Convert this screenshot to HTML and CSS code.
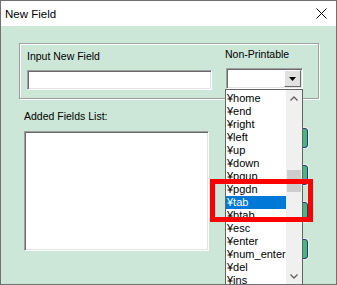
FILE: index.html
```html
<!DOCTYPE html>
<html>
	<head>
		<meta charset="UTF-8">
		<title>New Field</title>
		<link rel="stylesheet" href="styles.css">
	</head>

	<body>
		<div class="window">
			<div class="titlebar">
				<span class="caption">New Field</span>
				<svg class="close" width="11" height="11" viewBox="0 0 11 11">
					<path d="M0.5 0.5 L10.5 10.5 M10.5 0.5 L0.5 10.5" stroke="#000" stroke-width="1" fill="none"/>
				</svg>
			</div>
			<div class="client">
				<div class="group">
					<div class="col-input">
						<label class="lbl">Input New Field</label>
						<div class="textbox"></div>
					</div>
					<div class="col-np">
						<label class="lbl">Non-Printable</label>
						<div class="combo">
							<span class="combo-btn">
								<svg width="7" height="4" viewBox="0 0 7 4"><path d="M0 0 H7 L3.5 4 Z" fill="#000"/></svg>
							</span>
						</div>
					</div>
				</div>
				<div class="lower">
					<div class="col-list">
						<label class="lbl">Added Fields List:</label>
						<div class="listbox"></div>
					</div>
					<div class="buttons">
						<button class="gbtn"></button>
						<button class="gbtn"></button>
						<button class="gbtn"></button>
						<button class="gbtn"></button>
					</div>
				</div>
			</div>

			<!-- dropdown of the Non-Printable combo -->
			<div class="dropdown">
				<ul class="items">
					<li>¥home</li>
					<li>¥end</li>
					<li>¥right</li>
					<li>¥left</li>
					<li>¥up</li>
					<li>¥down</li>
					<li>¥pgup</li>
					<li>¥pgdn</li>
					<li class="sel">¥tab</li>
					<li>¥btab</li>
					<li>¥esc</li>
					<li>¥enter</li>
					<li>¥num_enter</li>
					<li>¥del</li>
					<li>¥ins</li>
				</ul>
				<div class="scroll">
					<span class="arrow">
						<svg width="8" height="5" viewBox="0 0 8 5"><path d="M0.5 4.5 L4 1 L7.5 4.5" stroke="#606060" stroke-width="1.3" fill="none"/></svg>
					</span>
					<span class="thumb"></span>
					<span class="arrow down">
						<svg width="8" height="5" viewBox="0 0 8 5"><path d="M0.5 0.5 L4 4 L7.5 0.5" stroke="#606060" stroke-width="1.3" fill="none"/></svg>
					</span>
				</div>
			</div>

			<div class="mark"></div>
		</div>
	</body>

</html>
```

FILE: styles.css
```css
/* dialog 337*285, green client area, dropdown list open over the buttons */
body {
	margin: 0;
	font-family: "Liberation Sans", Arial, sans-serif;
}

.window {
	position: relative;
	width: 337px;
	height: 285px;
	box-sizing: border-box;
	border: 1px solid #707070;
	background-color: #cce6d7;
	display: flex;
	flex-direction: column;
	overflow: hidden;
}

.titlebar {
	height: 25px;
	flex-shrink: 0;
	background-color: #fff;
	display: flex;
	align-items: center;
	justify-content: space-between;
	padding: 0 9px 0 4px;
	font-size: 11.5px;
	color: #000;
}

.close {
	display: block;
}

.client {
	flex: 1;
	padding: 17px 0 0 18px;
}

.lbl {
	display: block;
	font-size: 10.5px;
	line-height: 13px;
	color: #000;
	margin-bottom: 7px;
	white-space: nowrap;
}

.group {
	width: 300px;
	height: 56px;
	box-sizing: border-box;
	border: 1px solid #a0a0a0;
	box-shadow: inset 1px 1px #fff, 1px 1px #fff;
	display: flex;
	gap: 13px;
	padding: 4px 0 0 7px;
}

.col-input {
	padding-top: 2px;
}

.textbox,
.combo,
.listbox {
	box-sizing: border-box;
	background-color: #fff;
	border: 1px solid;
	border-color: #a0a0a0 #fff #fff #a0a0a0;
	box-shadow: inset 1px 1px #696969, inset -1px -1px #e3e3e3;
}

.textbox {
	width: 185px;
	height: 20px;
}

.combo {
	width: 77px;
	height: 21px;
	margin-left: 1px;
	display: flex;
	justify-content: flex-end;
	padding: 1px;
}

.combo-btn {
	width: 17px;
	box-sizing: border-box;
	background-color: #e1e1e1;
	border: 1px solid;
	border-color: #fff #696969 #696969 #fff;
	display: flex;
	align-items: center;
	justify-content: center;
}

.combo-btn svg {
	display: block;
}

.lower {
	display: flex;
	margin: 11px 0 0 5px;
}

.col-list .lbl {
	margin-bottom: 8px;
}

.listbox {
	width: 185px;
	height: 120px;
}

.buttons {
	display: flex;
	flex-direction: column;
	gap: 17px;
	margin: 18px 0 0 24px;
}

.gbtn {
	width: 75px;
	height: 20px;
	padding: 0;
	background-color: #4db384;
	border: 1px solid #1f3f66;
	border-radius: 3px;
	box-shadow: 0 0 0 1px #e9f1ec;
}

.dropdown {
	position: absolute;
	left: 224px;
	top: 88px;
	width: 78px;
	height: 197px;
	box-sizing: border-box;
	border: 1px solid #646464;
	background-color: #fff;
	display: flex;
}

.items {
	flex: 1;
	list-style: none;
	margin: 0;
	padding: 2px 0 0;
}

.items li {
	height: 13px;
	line-height: 13px;
	font-size: 11px;
	padding-left: 1px;
	color: #000;
	white-space: nowrap;
}

.items li.sel {
	background-color: #0078d7;
	color: #fff;
}

.scroll {
	width: 16px;
	background-color: #f0f0f0;
	display: flex;
	flex-direction: column;
}

.arrow {
	height: 17px;
	display: flex;
	align-items: center;
	justify-content: center;
	flex-shrink: 0;
}

.arrow svg {
	display: block;
}

.arrow.down {
	margin-top: auto;
}

.thumb {
	height: 22px;
	margin: 63px 1px 0;
	background-color: #cdcdcd;
}

.mark {
	position: absolute;
	left: 209px;
	top: 178px;
	width: 103px;
	height: 43px;
	box-sizing: border-box;
	border: 5px solid #ff0000;
}
```
